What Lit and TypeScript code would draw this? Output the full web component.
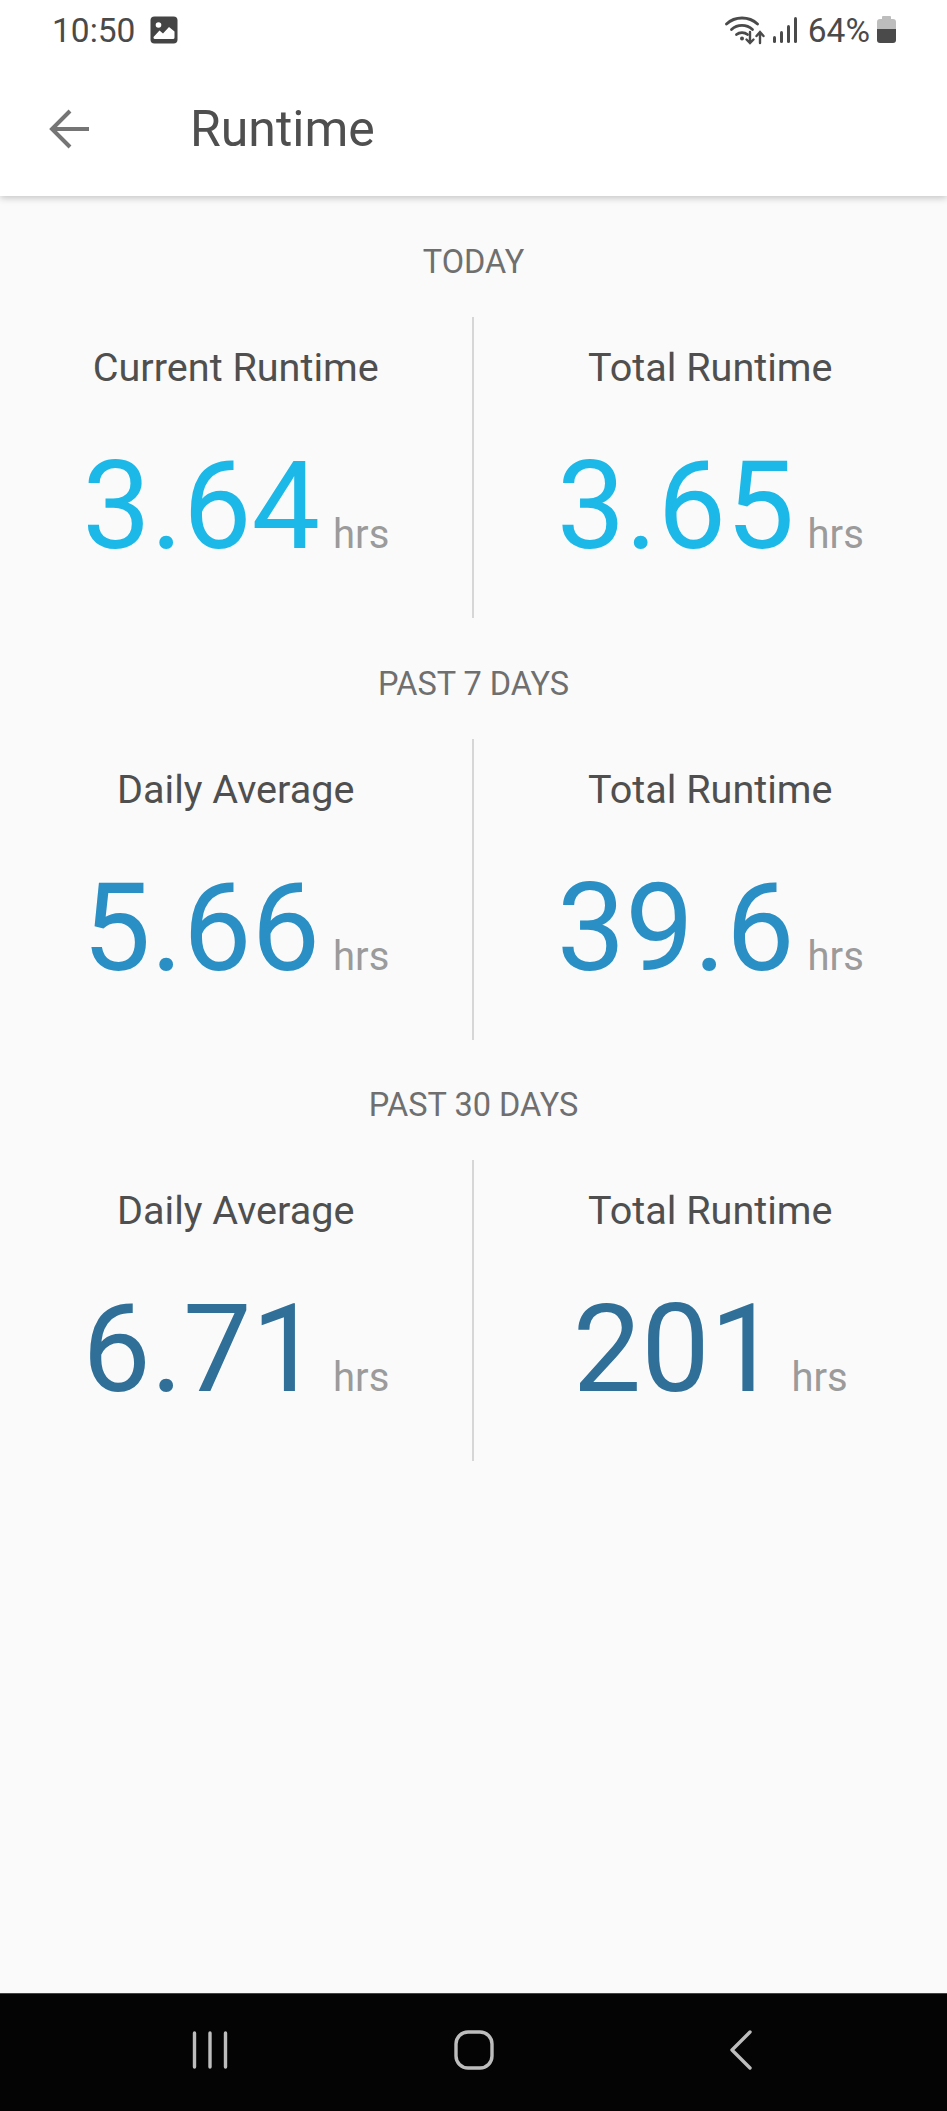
import { LitElement, html, css, svg } from 'lit';
import { customElement } from 'lit/decorators.js';

const sections = [
  { title: 'TODAY', color: '#1cb8e8', left: ['Current Runtime', '3.64'], right: ['Total Runtime', '3.65'] },
  { title: 'PAST 7 DAYS', color: '#2a8fc4', left: ['Daily Average', '5.66'], right: ['Total Runtime', '39.6'] },
  { title: 'PAST 30 DAYS', color: '#306f98', left: ['Daily Average', '6.71'], right: ['Total Runtime', '201'] },
];

const imageIcon = svg`<svg width="28" height="28" viewBox="0 0 28 28">
  <rect x="0.5" y="0.5" width="27" height="27" rx="4" fill="#444"/>
  <circle cx="8.5" cy="9" r="2.8" fill="#fff"/>
  <path d="M3.5 21 L9.5 14.5 L13 17.5 L19 11 L24.5 15.5 V21.5 a1.5 1.5 0 0 1 -1.5 1.5 H5 a1.5 1.5 0 0 1 -1.5 -1.5 Z" fill="#fff"/>
</svg>`;

const wifiIcon = svg`<svg width="40" height="30" viewBox="0 0 40 30" fill="none" stroke="#4a4a4a" stroke-linecap="round">
  <path d="M1.5 9 C10 1 24 1 32.5 9" stroke-width="2.8"/>
  <path d="M6.5 14.5 C12.5 9 21.5 9 27.5 14.5" stroke-width="2.8"/>
  <path d="M11.5 19.5 C14.5 17 19.5 17 22.5 19.5" stroke-width="2.8"/>
  <circle cx="17" cy="23.5" r="2" fill="#4a4a4a" stroke="none"/>
  <path d="M25 17 V27.5 M21.5 24.5 L25 28 L28.5 24.5" stroke-width="2.4"/>
  <path d="M35 28 V17.5 M31.5 21 L35 17 L38.5 21" stroke-width="2.4"/>
</svg>`;

const signalIcon = svg`<svg width="24" height="26" viewBox="0 0 24 26" fill="#4a4a4a">
  <rect x="0" y="19" width="3" height="7" rx="1.5"/>
  <rect x="7" y="14" width="3" height="12" rx="1.5"/>
  <rect x="14" y="8" width="3" height="18" rx="1.5"/>
  <rect x="21" y="0" width="3" height="26" rx="1.5"/>
</svg>`;

const batteryIcon = svg`<svg width="19" height="28" viewBox="0 0 19 28">
  <path d="M6 0 H13 a1 1 0 0 1 1 1 V3 H16 a3 3 0 0 1 3 3 V13 H0 V6 a3 3 0 0 1 3 -3 H5 V1 a1 1 0 0 1 1 -1 Z" fill="#bdbdbd"/>
  <path d="M0 13 H19 V24 a3 3 0 0 1 -3 3 H3 a3 3 0 0 1 -3 -3 Z" fill="#4a4a4a"/>
</svg>`;

const backIcon = svg`<svg width="40" height="40" viewBox="0 0 40 40" fill="none" stroke="#757575" stroke-width="4">
  <path d="M40 20 H3"/>
  <path d="M21 2 L3 20 L21 38"/>
</svg>`;

@customElement('app-root')
export class AppRoot extends LitElement {
  static styles = css`
    :host {
      display: flex;
      flex-direction: column;
      min-height: 100vh;
      background: #fafafa;
      font-family: Roboto, 'Liberation Sans', sans-serif;
    }
    .top {
      background: #fff;
      box-shadow: 0 2px 7px rgba(0, 0, 0, 0.22);
      height: 196px;
    }
    .status {
      height: 60px;
      padding: 0 51px 0 52px;
      display: flex;
      align-items: center;
      justify-content: space-between;
      color: #4a4a4a;
      font-size: 33.5px;
    }
    .status-left, .status-right {
      display: flex;
      align-items: center;
    }
    .status-left svg { margin-left: 15px; }
    .sig { margin-left: 8px; display: flex; }
    .pct { margin-left: 11px; margin-right: 7px; }
    .toolbar {
      height: 138px;
      display: flex;
      align-items: center;
      padding-left: 49px;
      color: #4f4f4f;
      font-size: 50px;
    }
    .toolbar svg { margin-right: 101px; }
    main {
      flex: 1;
      padding-top: 46px;
    }
    section { height: 421.7px; }
    .title {
      height: 40px;
      line-height: 40px;
      margin-bottom: 35px;
      text-align: center;
      font-size: 32.5px;
      color: #6f6f6f;
    }
    .row {
      display: grid;
      grid-template-columns: 1fr 1fr;
      height: 301px;
    }
    .cell {
      display: flex;
      flex-direction: column;
      align-items: center;
      padding-top: 28px;
    }
    .cell:first-child { border-right: 2px solid #d6d6d6; }
    .name {
      font-size: 39.6px;
      line-height: 46px;
      color: #4f4f4f;
    }
    .value {
      display: flex;
      align-items: baseline;
      gap: 13px;
      margin-top: 46px;
    }
    .num {
      font-size: 122px;
      line-height: 140px;
    }
    .unit {
      font-size: 40px;
      color: #9b9b9b;
    }
    nav {
      height: 118px;
      box-sizing: border-box;
      background: #040404;
      border-top: 1px solid #444;
      padding: 0 0 6px 192px;
      display: flex;
      align-items: center;
    }
    nav svg:nth-child(2) { margin-left: 226px; }
    nav svg:nth-child(3) { margin-left: 234px; }
  `;

  private cell(c: string[], color: string) {
    return html`<div class="cell">
      <div class="name">${c[0]}</div>
      <div class="value">
        <span class="num" style="color:${color}">${c[1]}</span><span class="unit">hrs</span>
      </div>
    </div>`;
  }

  render() {
    return html`
      <div class="top">
        <div class="status">
          <div class="status-left"><span>10:50</span>${imageIcon}</div>
          <div class="status-right">
            ${wifiIcon}<span class="sig">${signalIcon}</span>
            <span class="pct">64%</span>${batteryIcon}
          </div>
        </div>
        <div class="toolbar">${backIcon}<span>Runtime</span></div>
      </div>
      <main>
        ${sections.map(
          (s) => html`<section>
            <div class="title">${s.title}</div>
            <div class="row">${this.cell(s.left, s.color)}${this.cell(s.right, s.color)}</div>
          </section>`
        )}
      </main>
      <nav>
        <svg width="36" height="38" viewBox="0 0 36 38" stroke="#bdbdbd" stroke-width="3.4" stroke-linecap="round">
          <path d="M2.5 2 V36 M18 2 V36 M33.5 2 V36"/>
        </svg>
        <svg width="40" height="40" viewBox="0 0 40 40" fill="none" stroke="#bdbdbd" stroke-width="3.4">
          <rect x="2" y="2" width="36" height="36" rx="12"/>
        </svg>
        <svg width="24" height="42" viewBox="0 0 24 42" fill="none" stroke="#bdbdbd" stroke-width="3.4" stroke-linecap="round" stroke-linejoin="round">
          <path d="M22 3 L4 21 L22 39"/>
        </svg>
      </nav>
    `;
  }
}
